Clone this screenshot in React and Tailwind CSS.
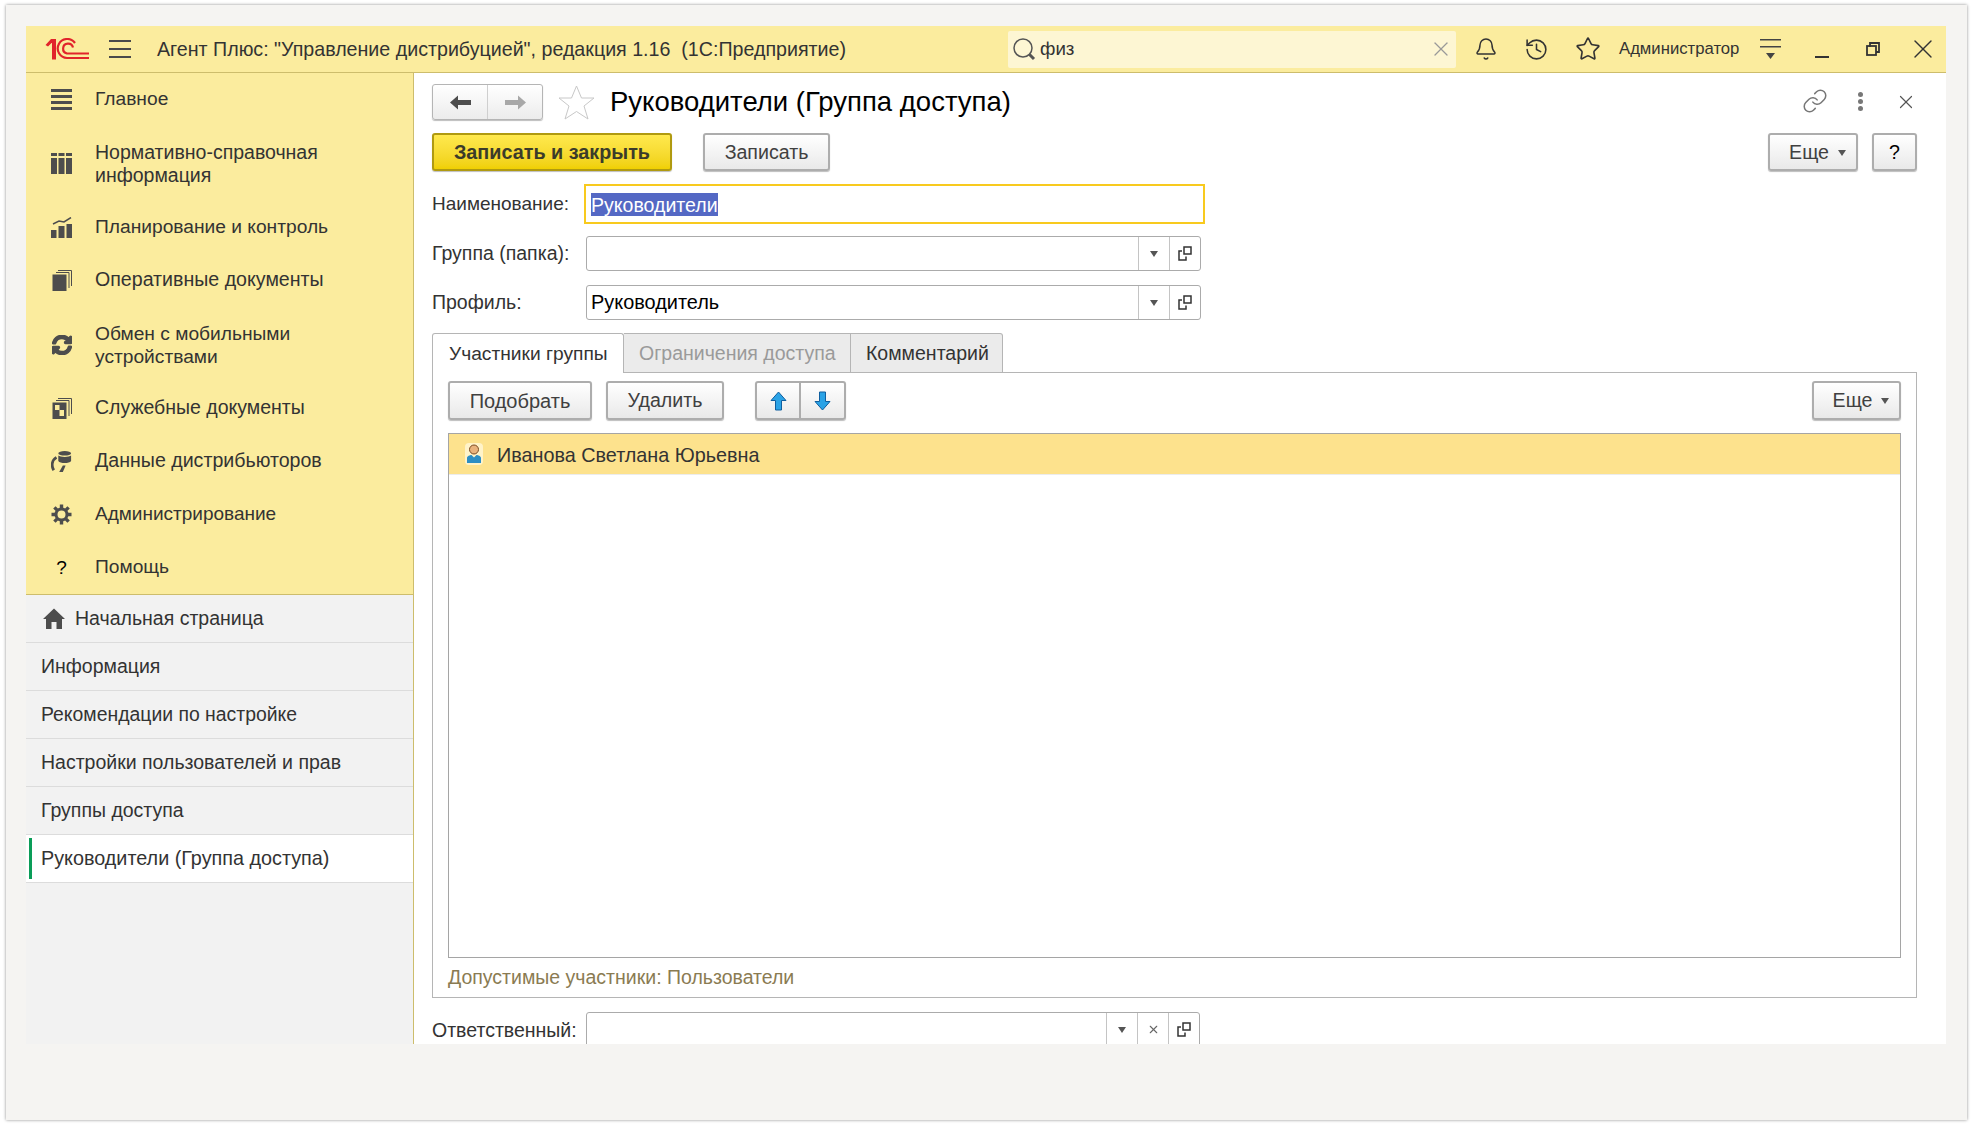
import { Bell, History, Star, X, Link } from 'lucide-react'
import { FaSyncAlt } from 'react-icons/fa'

const Logo = () => (
    <svg width="44" height="22" viewBox="0 0 44 22" fill="none" stroke="#e1242b">
        <path d="M0.5 7 L6 1 H11 V21.5 H7 V5 H6.5 L3 8.5 Z" fill="#e1242b" stroke="none" />
        <path d="M30 5 A 9.5 9.5 0 1 0 22 20 H44" strokeWidth="2.2" />
        <path d="M28 9.5 A 5 5 0 1 0 22 15.5 H44" strokeWidth="2.2" />
    </svg>
)

const IconBars = () => (
    <svg width="21" height="21" viewBox="0 0 21 21" fill="#4d4d4d">
        <rect y="0" width="21" height="3" />
        <rect y="6" width="21" height="3" />
        <rect y="12" width="21" height="3" />
        <rect y="18" width="21" height="3" />
    </svg>
)

const IconBook = () => (
    <svg width="21" height="21" viewBox="0 0 21 21" fill="#4d4d4d">
        <rect x="0" y="0" width="6" height="3" />
        <rect x="7.5" y="0" width="6" height="3" />
        <rect x="15" y="0" width="6" height="3" />
        <rect x="0" y="5" width="6" height="16" />
        <rect x="7.5" y="5" width="6" height="16" />
        <rect x="15" y="5" width="6" height="16" />
    </svg>
)

const IconChart = () => (
    <svg width="21" height="21" viewBox="0 0 21 21" fill="#4d4d4d">
        <path d="M2 7 L8 4 L13 5 L20 0.5" fill="none" stroke="#4d4d4d" strokeWidth="1.5" />
        <rect x="0" y="13" width="5.5" height="8" />
        <rect x="7.5" y="9" width="6" height="12" />
        <rect x="15.5" y="7" width="5.5" height="14" />
    </svg>
)

const IconDocs = () => (
    <svg width="20" height="21" viewBox="0 0 20 21" fill="#4d4d4d">
        <path d="M6 0.5 H19.5 V16 M4 2.5 H17 V18" fill="none" stroke="#4d4d4d" />
        <rect x="0.5" y="4.5" width="14" height="16.5" />
    </svg>
)

const IconServiceDocs = () => (
    <svg width="20" height="21" viewBox="0 0 20 21" fill="#4d4d4d">
        <path d="M6 0.5 H19.5 V16 M4 2.5 H17 V18" fill="none" stroke="#4d4d4d" />
        <rect x="0.5" y="4.5" width="14" height="16.5" />
        <rect x="3" y="7" width="4.5" height="5" fill="#fbec9e" />
        <rect x="7.5" y="12" width="4.5" height="6" fill="#fbec9e" />
    </svg>
)

const IconData = () => (
    <svg width="23" height="23" viewBox="0 0 23 23" fill="#4d4d4d">
        <ellipse cx="15" cy="2.5" rx="7" ry="2.5" />
        <path d="M8 5 C10 7 20 7 22 5 V11 C20 14 10 14 8 11 Z" />
        <path d="M6 7 C1 10 0 16 3 21" fill="none" stroke="#4d4d4d" strokeWidth="3" />
        <path d="M13 16 L9 23 H13 L16 16 Z" />
    </svg>
)

const IconGear = () => (
    <svg width="21" height="21" viewBox="0 0 21 21" fill="none" stroke="#4d4d4d">
        <circle cx="10.5" cy="10.5" r="5.5" strokeWidth="3" />
        <path
            d="M10.5 0.5 V4 M10.5 17 V20.5 M0.5 10.5 H4 M17 10.5 H20.5 M3.4 3.4 L5.9 5.9 M15.1 15.1 L17.6 17.6 M3.4 17.6 L5.9 15.1 M15.1 5.9 L17.6 3.4"
            strokeWidth="3.4"
        />
    </svg>
)

const IconHome = () => (
    <svg width="22" height="21" viewBox="0 0 22 21" fill="#4d4d4d">
        <path d="M11 0.5 L22 11 H19 V21 H13.5 V14 H8.5 V21 H3 V11 H0 Z" />
    </svg>
)

const OpenIcon = () => (
    <svg width="14" height="15" viewBox="0 0 14 15" fill="none" stroke="#333" strokeWidth="1.5">
        <rect x="6" y="1" width="7" height="7" />
        <path d="M4 5 H1 V14 H8 V10.5" />
    </svg>
)

const Caret = ({ className }) => (
    <svg width="8" height="6" viewBox="0 0 8 6" fill="#555" className={className}>
        <path d="M0 0 H8 L4 6 Z" />
    </svg>
)

const NavArrow = ({ color, flip }) => (
    <svg width="21" height="15" viewBox="0 0 21 15" fill={color} className={flip ? '-scale-x-100' : ''}>
        <path d="M0 7.5 L8 0.5 V5 H21 V10 H8 V14.5 Z" />
    </svg>
)

const BlueArrow = ({ flip }) => (
    <svg width="17" height="20" viewBox="0 0 17 20" fill="#2ba3e6" stroke="#0f5f9f" className={flip ? '-scale-y-100' : ''}>
        <path d="M8.5 1 L16 9.5 H11.5 V19 H5.5 V9.5 H1 Z" />
    </svg>
)

const PersonIcon = () => (
    <svg width="18" height="22" viewBox="0 0 18 22">
        <rect x="0" y="0" width="18" height="22" rx="4" fill="#fff3c9" />
        <circle cx="9" cy="6.5" r="4.5" fill="#e9b27c" stroke="#7a4a22" />
        <path d="M2 20 V15 C2 13 5 12 6.5 12 L9 14.5 L11.5 12 C13 12 16 13 16 15 V20 Z" fill="#2d8ec4" />
    </svg>
)

const SIDE_ITEMS = [
    { lines: ['Главное'], icon: <IconBars />, size: 'text-[19.2px]' },
    { lines: ['Нормативно-справочная', 'информация'], icon: <IconBook />, size: 'text-[19.5px]' },
    { lines: ['Планирование и контроль'], icon: <IconChart />, size: 'text-[19.2px]' },
    { lines: ['Оперативные документы'], icon: <IconDocs />, size: 'text-[19.6px]' },
    { lines: ['Обмен с мобильными', 'устройствами'], icon: <FaSyncAlt size={20} color="#4d4d4d" stroke="#4d4d4d" strokeWidth={36} />, size: 'text-[19.2px]' },
    { lines: ['Служебные документы'], icon: <IconServiceDocs />, size: 'text-[19.5px]' },
    { lines: ['Данные дистрибьюторов'], icon: <IconData />, size: 'text-[19.6px]' },
    { lines: ['Администрирование'], icon: <IconGear />, size: 'text-[19px]' },
    { lines: ['Помощь'], icon: <span className="text-[19px] text-black">?</span>, size: 'text-[19.2px]' },
]

const OPEN_ITEMS = [
    { name: 'Информация', size: 'text-[19.5px]' },
    { name: 'Рекомендации по настройке', size: 'text-[19.4px]' },
    { name: 'Настройки пользователей и прав', size: 'text-[19.5px]' },
    { name: 'Группы доступа', size: 'text-[19.5px]' },
]

function Btn({ className = '', children }) {
    return (
        <button className={`flex items-center justify-center rounded-[3px] border-2 border-[#adadad] bg-linear-to-b from-white to-[#e9e9e9] pt-px text-[19.6px] text-[#404040] shadow-[0_1px_1px_#bdbdbd] ${className}`}>
            {children}
        </button>
    )
}

function Field({ value, clear, className = '' }) {
    return (
        <div className={`flex h-full items-stretch rounded-[3px] border border-[#ababab] bg-white ${className}`}>
            <div className="flex flex-1 items-center pt-px pl-[4px] text-[19.9px] text-black">{value}</div>
            <div className="flex w-[31px] items-center justify-center border-l border-[#c4c4c4]">
                <Caret />
            </div>
            {clear && (
                <div className="flex w-[31px] items-center justify-center border-l border-[#c4c4c4]">
                    <X size={13} color="#666" />
                </div>
            )}
            <div className="flex w-[31px] items-center justify-center border-l border-[#c4c4c4]">
                <OpenIcon />
            </div>
        </div>
    )
}

export default function App() {
    return (
        <div className="h-[1126px] w-[1972px] overflow-hidden bg-white pt-[5px] pl-[6px] font-['Liberation_Sans',Arial,sans-serif] text-[19.5px] text-[#333]">
            <div className="h-[1115px] w-[1961px] bg-[#f5f4f2] pt-[21px] pl-[20px] shadow-[0_0_3px_#8f8f8f]">
                <div className="flex h-[1018px] w-[1920px] flex-col overflow-hidden bg-white">
                    {/* шапка */}
                    <div className="flex h-[47px] shrink-0 items-center border-b border-[#cdbd6c] bg-[#fbec9e]">
                        <div className="ml-[19px] w-[44px]"><Logo /></div>
                        <div className="ml-[20px] flex h-[18px] w-[22px] flex-col justify-between">
                            <div className="h-[2px] bg-[#4a4a4a]" />
                            <div className="h-[2px] bg-[#4a4a4a]" />
                            <div className="h-[2px] bg-[#4a4a4a]" />
                        </div>
                        <div className="ml-[26px] w-[851px] pt-px text-[19.65px] whitespace-pre">Агент Плюс: "Управление дистрибуцией", редакция 1.16  (1С:Предприятие)</div>
                        <div className="flex h-[37px] w-[448px] items-center rounded-[2px] bg-[#fdf6d3] pr-[3px] pl-[4px]">
                            <svg width="24" height="24" viewBox="0 0 24 24" fill="none" stroke="#555">
                                <circle cx="11" cy="11" r="9" strokeWidth="1.5" />
                                <path d="M17.5 17.5 L22 22" strokeWidth="3" />
                            </svg>
                            <span className="ml-[4px] pt-px text-[18.7px]">физ</span>
                            <X size={24} strokeWidth={1.3} color="#999" className="ml-auto" />
                        </div>
                        <Bell size={24} strokeWidth={1.5} color="#333" className="ml-[18px]" />
                        <History size={25} strokeWidth={1.5} color="#333" className="ml-[26px]" />
                        <Star size={26} strokeWidth={1.5} color="#333" className="ml-[26px]" />
                        <span className="ml-[18px] w-[120px] text-[16.7px] whitespace-nowrap">Администратор</span>
                        <svg width="21" height="22" viewBox="0 0 21 22" fill="#444" className="ml-[21px]">
                            <rect y="1" width="21" height="1.5" />
                            <rect y="8" width="21" height="1.5" />
                            <path d="M6 15 H15 L10.5 21 Z" />
                        </svg>
                        <div className="mt-[16px] ml-[34px] h-[2px] w-[14px] bg-[#333]" />
                        <svg width="14" height="14" viewBox="0 0 14 14" fill="none" stroke="#333" strokeWidth="1.8" className="ml-[37px]">
                            <rect x="1" y="4" width="9" height="9" />
                            <path d="M4 5 V1 H13 V10 H10" />
                        </svg>
                        <X size={32} strokeWidth={1} color="#333" className="ml-[27px]" />
                    </div>

                    <div className="flex min-h-0 flex-1">
                        {/* панель разделов */}
                        <div className="flex w-[388px] shrink-0 flex-col border-r border-[#cdbd6c] bg-[#f2f2f2]">
                            <div className="border-b border-[#cdbd6c] bg-[#fbec9e]">
                                {SIDE_ITEMS.map((item) => (
                                    <div
                                        key={item.lines[0]}
                                        className={`flex items-center pl-[25px] leading-[23px] ${item.size} ${item.lines.length > 1 ? 'h-[75px]' : 'h-[53px]'}`}
                                    >
                                        <div className="flex w-[44px] shrink-0 items-center">
                                            <div className="flex w-[21px] justify-center">{item.icon}</div>
                                        </div>
                                        <div className={item.lines.length > 1 ? '' : '-mt-[2px]'}>
                                            {item.lines.map((line) => (
                                                <div key={line}>{line}</div>
                                            ))}
                                        </div>
                                    </div>
                                ))}
                            </div>
                            <div className="flex h-[48px] items-center border-b border-[#dcdcdc] pl-[17px]">
                                <IconHome />
                                <span className="ml-[10px]">Начальная страница</span>
                            </div>
                            {OPEN_ITEMS.map((item) => (
                                <div key={item.name} className={`flex h-[48px] items-center border-b border-[#dcdcdc] pl-[15px] ${item.size}`}>
                                    {item.name}
                                </div>
                            ))}
                            <div className="flex h-[48px] items-center border-b border-[#dcdcdc] bg-white pl-[3px] text-[19.8px]">
                                <div className="h-[41px] w-[3px] bg-[#0a9d58]" />
                                <span className="ml-[9px]">Руководители (Группа доступа)</span>
                            </div>
                        </div>

                        {/* форма */}
                        <div className="min-w-0 flex-1 bg-white pr-[29px] pl-[18px]">
                            <div className="mt-[11px] flex h-[36px] items-center">
                                <div className="flex h-full w-[111px] rounded-[3px] border border-[#b5b5b5] bg-linear-to-b from-white to-[#ececec] shadow-[0_1px_1px_#bdbdbd]">
                                    <div className="flex w-[55px] items-center justify-center border-r border-[#cfcfcf]">
                                        <NavArrow color="#4d4d4d" />
                                    </div>
                                    <div className="flex flex-1 items-center justify-center">
                                        <NavArrow color="#a8a8a8" flip />
                                    </div>
                                </div>
                                <svg width="37" height="35" viewBox="0 0 37 35" fill="none" stroke="#c8c8c8" className="ml-[15px]">
                                    <path d="M18.5 1 L23.5 13 H36 L26 21 L30 34 L18.5 26.5 L7 34 L11 21 L1 13 H13.5 Z" />
                                </svg>
                                <h1 className="ml-[15px] text-[27.5px] font-normal text-black">Руководители (Группа доступа)</h1>
                                <Link size={26} strokeWidth={1.4} color="#777" className="mb-[2px] ml-auto" />
                                <div className="mb-[2px] ml-[30px] flex flex-col gap-[2px]">
                                    <div className="size-[5px] rounded-full bg-[#777]" />
                                    <div className="size-[5px] rounded-full bg-[#777]" />
                                    <div className="size-[5px] rounded-full bg-[#777]" />
                                </div>
                                <X size={22} strokeWidth={1.3} color="#555" className="ml-[32px]" />
                            </div>

                            <div className="mt-[13px] flex h-[38px]">
                                <button className="flex w-[240px] items-center justify-center rounded-[3px] border-2 border-[#b09a10] bg-linear-to-b from-[#ffe94d] to-[#f0d000] pt-px text-[19.8px] font-bold text-[#3b3b2a] shadow-[0_1px_1px_#bdbdbd]">
                                    Записать и закрыть
                                </button>
                                <Btn className="ml-[31px] w-[127px]">Записать</Btn>
                                <Btn className="ml-auto w-[90px] pl-[9px]">
                                    Еще <Caret className="ml-[9px]" />
                                </Btn>
                                <Btn className="ml-[14px] w-[45px] text-black">?</Btn>
                            </div>

                            <div className="mt-[13px] flex h-[40px] items-center">
                                <span className="w-[152px] pt-px text-[19px]">Наименование:</span>
                                <div className="flex h-full w-[621px] items-center border-2 border-[#f8ca1e] pl-[5px]">
                                    <span className="bg-[#5468c4] pt-px text-[19.55px] leading-[22px] text-white">Руководители</span>
                                </div>
                            </div>

                            <div className="mt-[12px] flex h-[35px] items-center">
                                <span className="w-[154px] pt-px">Группа (папка):</span>
                                <Field value="" className="w-[615px]" />
                            </div>

                            <div className="mt-[14px] flex h-[35px] items-center">
                                <span className="w-[154px] pt-px">Профиль:</span>
                                <Field value="Руководитель" className="w-[615px]" />
                            </div>

                            <div className="relative z-10 mt-[13px] -mb-px flex h-[40px] items-stretch">
                                <div className="flex w-[192px] items-center rounded-t-[3px] border border-b-0 border-[#b5b5b5] bg-white pt-px pl-[16px] text-[19.2px]">Участники группы</div>
                                <div className="flex w-[227px] items-center border-t border-r border-b border-[#b5b5b5] bg-[#ebebeb] pt-px pl-[15px] text-[#9a9a9a]">Ограничения доступа</div>
                                <div className="flex w-[152px] items-center rounded-tr-[3px] border-t border-r border-b border-[#b5b5b5] bg-[#ebebeb] pt-px pl-[15px]">Комментарий</div>
                            </div>

                            <div className="h-[626px] border border-[#b5b5b5] px-[15px] pt-[8px]">
                                <div className="flex h-[39px]">
                                    <Btn className="w-[144px] text-[20px]">Подобрать</Btn>
                                    <Btn className="ml-[14px] w-[118px]">Удалить</Btn>
                                    <div className="ml-[31px] flex w-[91px] rounded-[3px] border-2 border-[#adadad] bg-linear-to-b from-white to-[#e9e9e9] shadow-[0_1px_1px_#bdbdbd]">
                                        <div className="flex w-[44px] items-center justify-center border-r-2 border-[#adadad]">
                                            <BlueArrow />
                                        </div>
                                        <div className="flex flex-1 items-center justify-center">
                                            <BlueArrow flip />
                                        </div>
                                    </div>
                                    <Btn className="ml-auto w-[89px] pl-[9px]">
                                        Еще <Caret className="ml-[9px]" />
                                    </Btn>
                                </div>
                                <div className="mt-[13px] h-[525px] border border-[#a5a5a5]">
                                    <div className="flex h-[41px] items-center border-b border-[#ececec] bg-[#fde28d] pl-[16px]">
                                        <PersonIcon />
                                        <span className="mt-[3px] ml-[14px] text-[19.8px]">Иванова Светлана Юрьевна</span>
                                    </div>
                                </div>
                                <div className="mt-[5px] text-[#8a7b52]">Допустимые участники: Пользователи</div>
                            </div>

                            <div className="mt-[14px] flex h-[35px] items-center">
                                <span className="w-[154px] pt-[2px]">Ответственный:</span>
                                <Field value="" clear className="w-[614px]" />
                            </div>
                        </div>
                    </div>
                </div>
            </div>
        </div>
    )
}
